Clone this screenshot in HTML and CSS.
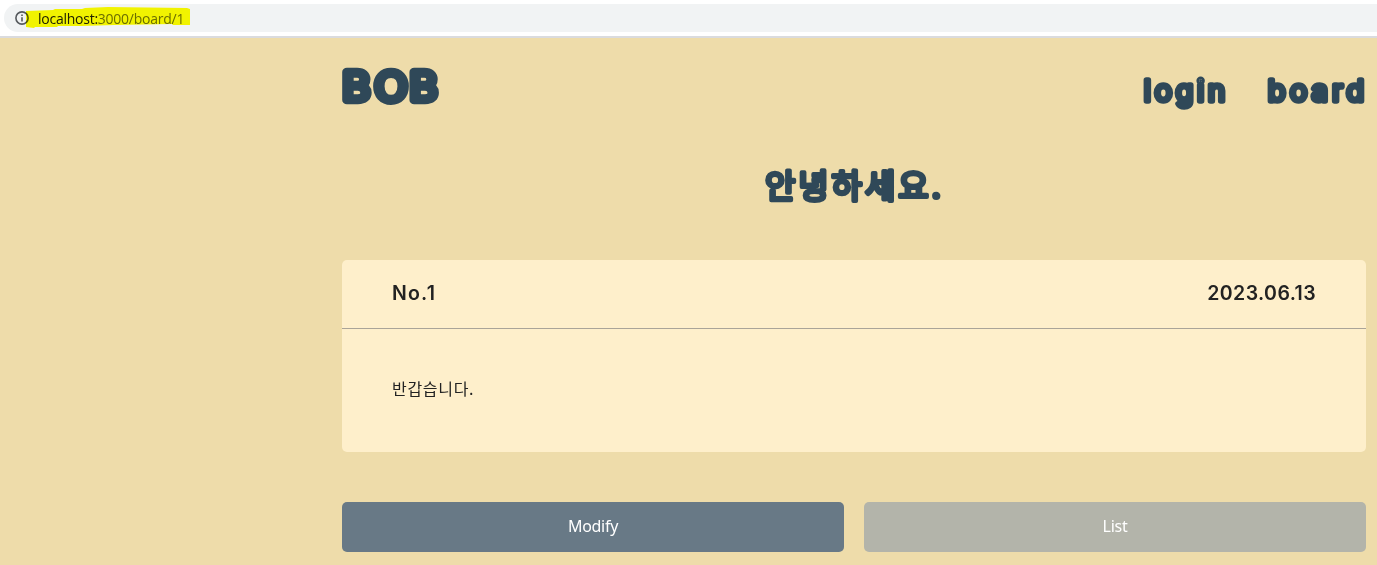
FILE: index.html
```
<!DOCTYPE html>
<html lang="ko">

<head>
    <meta charset="UTF-8">
    <meta name="viewport" content="width=device-width, initial-scale=1.0">
    <title>BOB</title>
    <link rel="stylesheet" href="styles.css">
</head>

<body>
    <div class="address-bar">
        <div class="address">
            <svg class="info-icon" width="14" height="14" viewBox="0 0 14 14">
                <circle cx="7" cy="7" r="6.1" />
                <path d="M7 6.2v4.3M7 3.4v1.6" />
            </svg>
            <span class="url"><b>localhost:</b>3000/board/1</span>
            <svg class="marker" width="166" height="24" viewBox="0 0 166 24">
                <path d="M1 6L28 5L30 4L57 4L60 3L83 2L162 3L165 4L165 20L148 20L147 19L90 20L56 21L33 21L32 22L10 22L9 23L1 22Z" />
            </svg>
        </div>
    </div>
    <div class="container">
        <header class="header">
            <a class="logo" href="/">
                <svg width="100" height="44">
                    <text x="0.5 29.5 60.5" y="34" transform="scale(1.12 1)">BOB</text>
                </svg>
            </a>
            <nav class="nav">
                <a href="/login">
                    <svg width="84" height="44">
                        <text x="2" y="35" textLength="81" lengthAdjust="spacing">login</text>
                    </svg>
                </a>
                <a href="/board">
                    <svg width="100" height="44">
                        <text x="2" y="35" textLength="96" lengthAdjust="spacing">board</text>
                    </svg>
                </a>
            </nav>
        </header>
        <h1 class="title">
            <svg width="180" height="44">
                <text x="1" y="33" textLength="176" lengthAdjust="spacing">안녕하세요.</text>
            </svg>
        </h1>
        <div class="post">
            <div class="post-info">
                <span class="post-no">No.1</span>
                <span class="post-date">2023.06.13</span>
            </div>
            <p class="post-content">반갑습니다.</p>
        </div>
        <div class="buttons">
            <button class="modify">Modify</button>
            <button class="list">List</button>
        </div>
    </div>
</body>

</html>
```
FILE: styles.css
```
* {
    box-sizing: border-box;
}
body {
    margin: 0;
    height: 565px;
    overflow: hidden;
    background-color: #eedcaa;
    font-family: "Noto Sans", "Noto Sans CJK KR", sans-serif;
    color: #222222;
}
.address-bar {
    height: 38px;
    padding: 4px 0 0 4px;
    background-color: #ffffff;
    border-bottom: 2px solid #dadbde;
}
.address {
    position: relative;
    display: flex;
    align-items: center;
    height: 28px;
    padding-left: 11px;
    background-color: #f1f3f4;
    border-radius: 14px 0 0 14px;
}
.info-icon {
    fill: none;
    stroke: #55595d;
    stroke-width: 1.6;
}
.url {
    margin-left: 9px;
    font-family: "Open Sans", sans-serif;
    font-size: 14px;
    letter-spacing: -0.25px;
    color: #6b6e70;
}
.url b {
    font-weight: 400;
    color: #202124;
}
/* highlighter over the url */
.marker {
    position: absolute;
    left: 21px;
    top: 1px;
    fill: #ffff00;
    mix-blend-mode: multiply;
}
.container {
    width: 1024px;
    margin-left: 342px;
}
.header {
    display: flex;
    justify-content: space-between;
    padding-top: 28px;
}
.header svg,
.title svg {
    display: block;
    overflow: visible;
    font-family: "Inter", "Noto Sans CJK KR", sans-serif;
    font-weight: 200;
    fill: #2f4858;
    stroke: #2f4858;
    stroke-linejoin: round;
}
.logo svg {
    font-size: 38px;
    stroke-width: 8.5;
}
.nav {
    display: flex;
    gap: 40px;
}
.nav svg {
    font-size: 29px;
    font-weight: 300;
    stroke-width: 5.6;
}
.title {
    display: flex;
    justify-content: center;
    margin: 55px 0 51px;
}
.title svg {
    font-size: 33px;
    font-weight: 400;
    stroke-width: 4;
}
.post {
    height: 192px;
    background-color: #feefcb;
    border-radius: 5px;
}
.post-info {
    display: flex;
    justify-content: space-between;
    align-items: center;
    height: 69px;
    padding: 0 50px 3px;
    border-bottom: 1px solid #aaa498;
    font-family: "Inter", sans-serif;
    font-size: 19.5px;
    font-weight: 600;
    letter-spacing: 0.4px;
}
.post-no {
    letter-spacing: 1.2px;
}
.post-content {
    margin: 0;
    padding: 47px 50px;
    font-family: "Noto Sans CJK KR", sans-serif;
    font-size: 16px;
    font-weight: 400;
    line-height: 24px;
    letter-spacing: 0.7px;
}
.buttons {
    display: flex;
    gap: 20px;
    margin-top: 50px;
}
.buttons button {
    flex: 1;
    height: 50px;
    padding: 0 0 2px;
    border: none;
    border-radius: 5px;
    font-family: "Noto Sans", sans-serif;
    font-size: 16px;
    letter-spacing: -0.3px;
    color: #ffffff;
    cursor: pointer;
}
.buttons .modify {
    background-color: #687986;
}
.buttons .list {
    background-color: #b3b4aa;
}
```
